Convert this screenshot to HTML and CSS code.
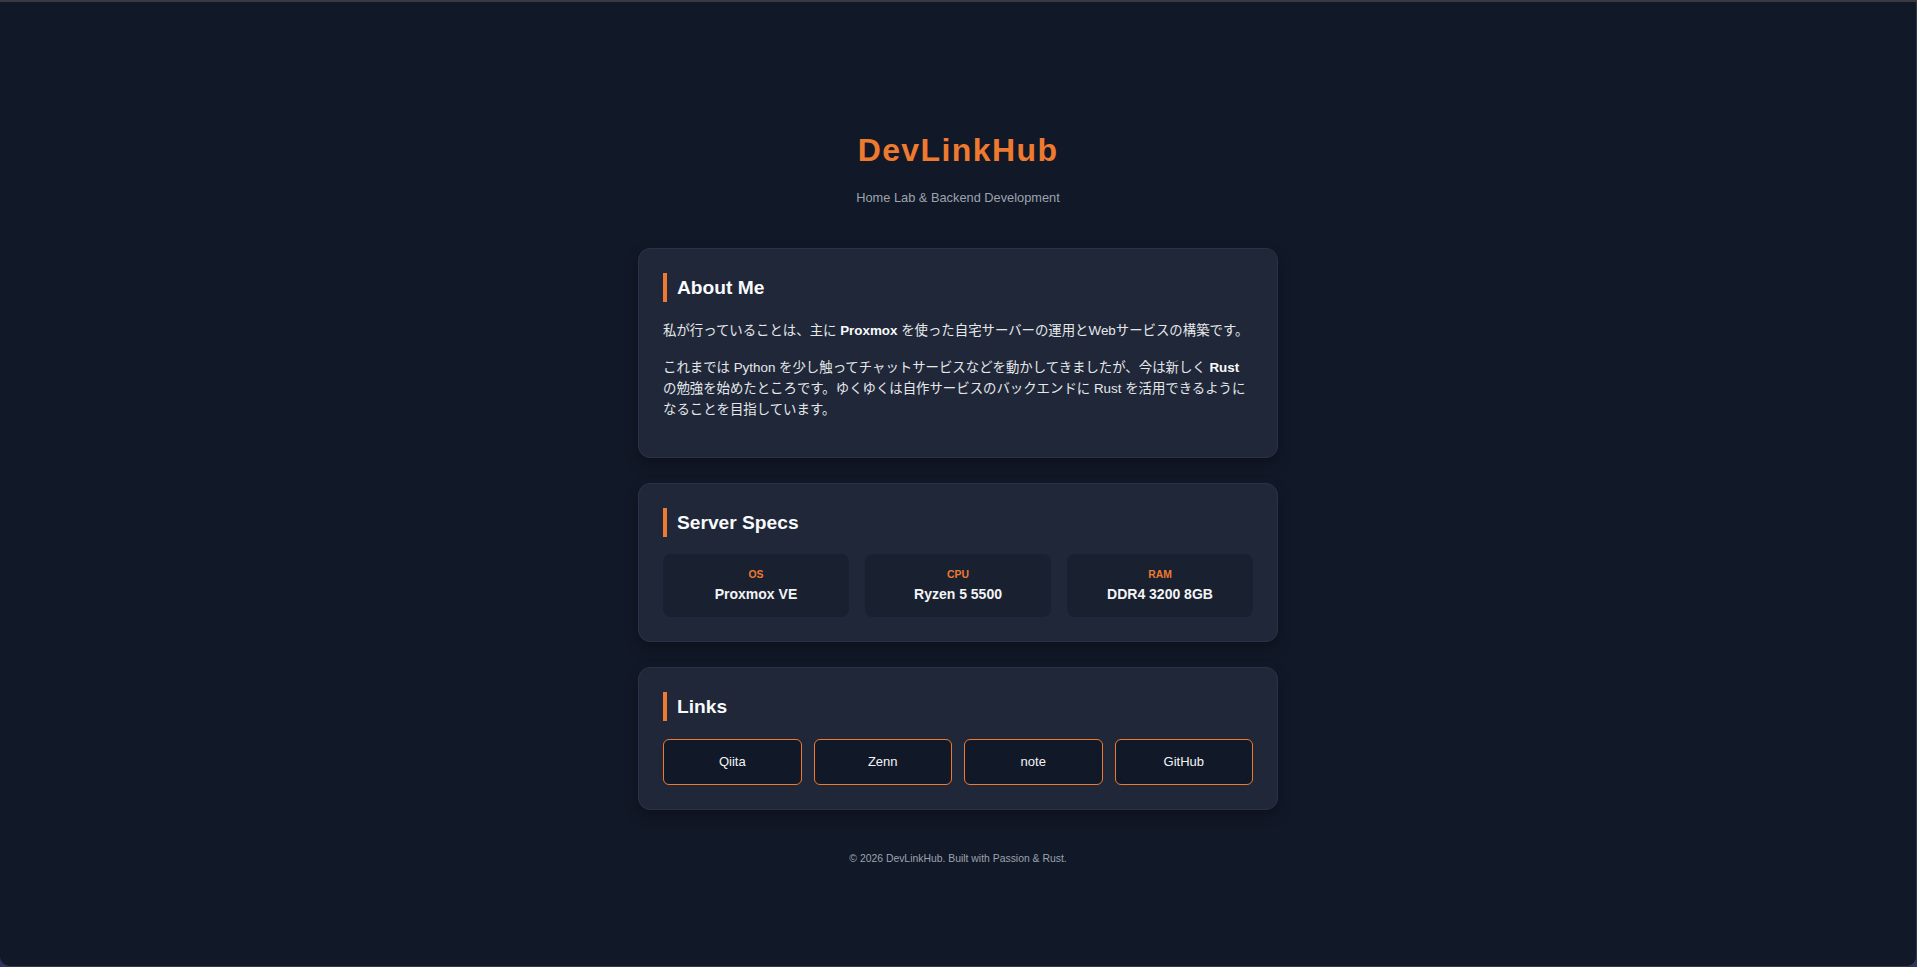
FILE: index.html
```html
<!DOCTYPE html>
<html lang="ja">
<head>
<meta charset="utf-8">
<title>DevLinkHub</title>
<link rel="stylesheet" href="styles.css">
</head>
<body>
<div class="window">
  <main class="page">
    <header class="hero">
      <h1 class="brand">DevLinkHub</h1>
      <p class="tagline">Home Lab &amp; Backend Development</p>
    </header>

    <section class="card">
      <h2 class="card-title">About Me</h2>
      <p class="text">私が行っていることは、主に <strong>Proxmox</strong> を使った自宅サーバーの運用とWebサービスの構築です。</p>
      <p class="text">これまでは Python を少し触ってチャットサービスなどを動かしてきましたが、今は新しく <strong>Rust</strong> の勉強を始めたところです。ゆくゆくは自作サービスのバックエンドに Rust を活用できるようになることを目指しています。</p>
    </section>

    <section class="card">
      <h2 class="card-title">Server Specs</h2>
      <div class="specs">
        <div class="spec">
          <div class="spec-label">OS</div>
          <div class="spec-value">Proxmox VE</div>
        </div>
        <div class="spec">
          <div class="spec-label">CPU</div>
          <div class="spec-value">Ryzen 5 5500</div>
        </div>
        <div class="spec">
          <div class="spec-label">RAM</div>
          <div class="spec-value">DDR4 3200 8GB</div>
        </div>
      </div>
    </section>

    <section class="card">
      <h2 class="card-title">Links</h2>
      <nav class="links">
        <a class="link" href="#">Qiita</a>
        <a class="link" href="#">Zenn</a>
        <a class="link" href="#">note</a>
        <a class="link" href="#">GitHub</a>
      </nav>
    </section>

    <footer class="footer">© 2026 DevLinkHub. Built with Passion &amp; Rust.</footer>
  </main>
</div>
</body>
</html>
```

FILE: styles.css
```css
html {
  background: #2a3566;
}

body {
  margin: 0;
  font-family: "Liberation Sans", Arial, "Noto Sans CJK JP", sans-serif;
  color: #e5e7eb;
}

.window {
  box-sizing: border-box;
  height: 100vh;
  background: #111827;
  border-top: 2px solid #3b3a43;
  border-right: 1px solid #333a4b;
  border-bottom: 1px solid #333a4b;
  border-radius: 0 0 10px 10px;
  overflow: hidden;
}

.page {
  width: 640px;
  margin: 0 auto;
  padding-top: 129px;
}

.hero {
  text-align: center;
  margin-bottom: 41px;
}

.brand {
  margin: 0;
  font-size: 32px;
  line-height: 38px;
  font-weight: 700;
  letter-spacing: 1.4px;
  color: #ee7a30;
}

.tagline {
  margin: 19px 0 0;
  font-size: 12.8px;
  line-height: 19px;
  color: #9ca3af;
}

.card {
  box-sizing: border-box;
  background: #1f2738;
  border: 1px solid #2a3345;
  border-radius: 12px;
  padding: 24px;
  margin-bottom: 25px;
  box-shadow: 0 6px 14px rgba(0, 0, 0, 0.28);
}

.card-title {
  margin: 0 0 17.5px;
  padding-left: 10px;
  border-left: 4px solid #ee7a30;
  font-size: 19.2px;
  line-height: 29px;
  font-weight: 700;
  color: #f9fafb;
}

.text {
  margin: 0 0 16px;
  font-size: 13.4px;
  line-height: 21px;
  color: #e5e7eb;
}

.text:last-child {
  margin-bottom: 13px;
}

.text strong {
  color: #f9fafb;
  font-weight: 700;
}

.specs {
  display: grid;
  grid-template-columns: repeat(3, 1fr);
  gap: 16px;
}

.spec {
  background: #192030;
  border-radius: 8px;
  padding: 15px 10px 14px;
  text-align: center;
}

.spec-label {
  font-size: 10.4px;
  line-height: 12px;
  font-weight: 700;
  color: #ee7a30;
  margin-bottom: 5px;
}

.spec-value {
  font-size: 14px;
  line-height: 17px;
  font-weight: 700;
  color: #f3f4f6;
}

.links {
  display: grid;
  grid-template-columns: repeat(4, 1fr);
  gap: 12px;
}

.link {
  box-sizing: border-box;
  height: 46px;
  display: flex;
  align-items: center;
  justify-content: center;
  background: #111827;
  border: 1px solid #ee7a30;
  border-radius: 6px;
  color: #f3f4f6;
  font-size: 13px;
  text-decoration: none;
}

.footer {
  margin-top: 41px;
  text-align: center;
  font-size: 10.4px;
  line-height: 16px;
  color: #9ca3af;
}
```
